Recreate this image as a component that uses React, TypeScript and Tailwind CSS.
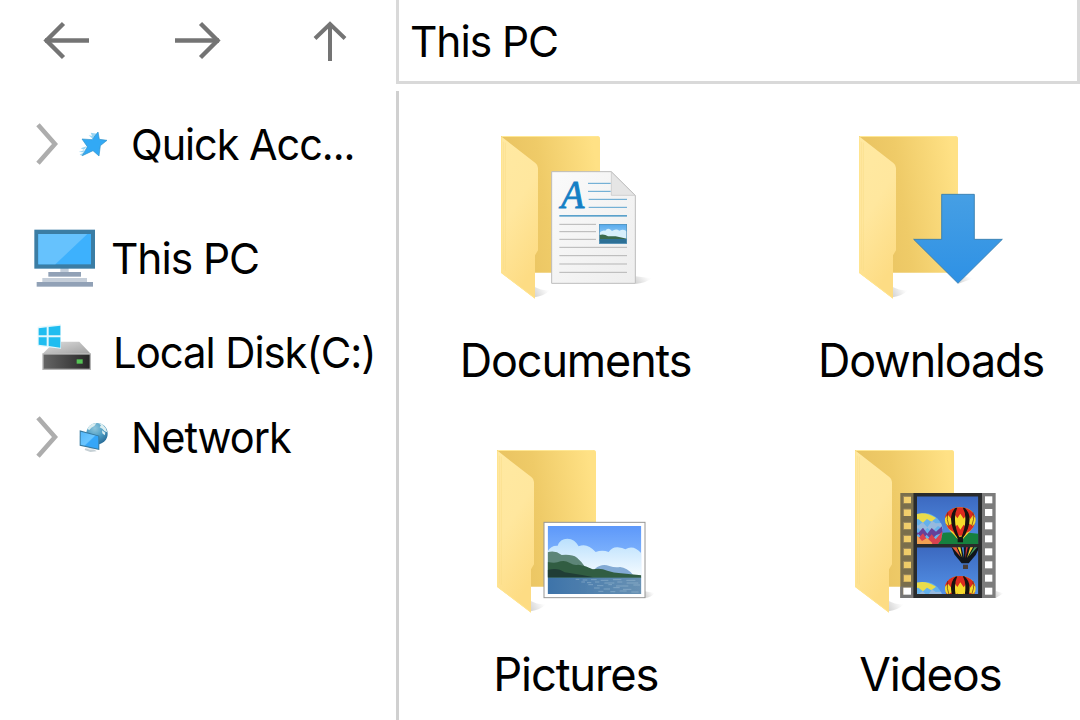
import type { ReactNode } from "react";

const INK = "#747474";

function BackArrow() {
  return (
    <svg className="block" width="48" height="42" viewBox="0 0 48 42" fill="none" stroke={INK} strokeWidth="4.4">
      <path d="M3 20.5H47" />
      <path d="M21.5 3.5L4.5 20.5L21.5 37.5" />
    </svg>
  );
}

function ForwardArrow() {
  return (
    <svg className="block" width="48" height="42" viewBox="0 0 48 42" fill="none" stroke={INK} strokeWidth="4.4">
      <path d="M1 20.5H45" />
      <path d="M26.5 3.5L43.5 20.5L26.5 37.5" />
    </svg>
  );
}

function UpArrow() {
  return (
    <svg className="block" width="34" height="42" viewBox="0 0 34 42" fill="none" stroke={INK} strokeWidth="4">
      <path d="M17 3V41" />
      <path d="M2 18.5L17 4L32 18.5" />
    </svg>
  );
}

function Chevron() {
  return (
    <svg className="block" width="22" height="42" viewBox="0 0 22 42" fill="none" stroke="#adadad" strokeWidth="4.6">
      <path d="M2 1.8L19 21L2 40.2" />
    </svg>
  );
}

function StarIcon() {
  return (
    <svg className="block" width="30" height="27" viewBox="0 0 90 81">
      <path d="M38 5L58 8L50 20L42 14ZM32 13L48 16L44 23ZM8 52L26 46L18 56ZM2 63L20 57L16 64ZM5 71L18 64L14 75Z" fill="#9ad5f3" />
      <path d="M60 3L64 25L87 28L67 44L63 75L45 59L13 74L28 47L12 24L42 26Z" fill="#32a9f5" stroke="#3193c9" strokeWidth="2" />
    </svg>
  );
}

function ComputerIcon() {
  return (
    <svg className="block" width="62" height="58" viewBox="43 41 186 174">
      <rect x="122" y="157" width="25" height="14" fill="#c3cedb" />
      <rect x="86" y="170" width="98" height="14" fill="#91a1b6" />
      <rect x="68" y="188" width="134" height="13" fill="#c5ced9" />
      <rect x="51" y="200" width="169" height="14" fill="#91a1b6" />
      <rect x="44" y="43" width="182" height="117" fill="#3b7da4" />
      <rect x="56" y="56" width="158" height="91" fill="#3db1fd" />
      <path d="M56 56H203L107 147H56Z" fill="#66c2fd" />
    </svg>
  );
}

function DiskIcon() {
  return (
    <svg className="block" width="56" height="48" viewBox="52 328 168 144">
      <defs>
        <linearGradient id="diskTop" x1="0" y1="0" x2="1" y2="1">
          <stop offset="0" stopColor="#dedede" />
          <stop offset="1" stopColor="#a0a0a0" />
        </linearGradient>
        <linearGradient id="diskFront" x1="0" y1="0" x2="1" y2="0">
          <stop offset="0" stopColor="#666" />
          <stop offset="1" stopColor="#262626" />
        </linearGradient>
      </defs>
      <path d="M105 381H179L213 417H69Z" fill="url(#diskTop)" />
      <rect x="70" y="418" width="142" height="46" fill="url(#diskFront)" stroke="#b4b4b4" strokeWidth="4" />
      <rect x="171" y="434" width="18" height="13" fill="#55c455" />
      <path d="M54 336L124 329V402L54 394Z" fill="#e2f7fd" />
      <path d="M57 341L81 338V362H57ZM87 337L122 333V362H87ZM57 368H81V393L57 390ZM87 368H122V399L87 394Z" fill="#1fbdf0" />
    </svg>
  );
}

function NetworkIcon() {
  return (
    <svg className="block" width="30" height="30" viewBox="178 63 90 90">
      <defs>
        <radialGradient id="globe" cx="0.4" cy="0.25" r="0.75">
          <stop offset="0" stopColor="#8fc6dc" />
          <stop offset="0.55" stopColor="#4d9dc4" />
          <stop offset="1" stopColor="#2a6e9a" />
        </radialGradient>
        <linearGradient id="netScreen" x1="0" y1="0" x2="1" y2="1">
          <stop offset="0" stopColor="#55b8fb" />
          <stop offset="0.5" stopColor="#6bc6ff" />
          <stop offset="0.55" stopColor="#35a6f8" />
          <stop offset="1" stopColor="#35a6f8" />
        </linearGradient>
      </defs>
      <circle cx="232" cy="98" r="32" fill="url(#globe)" />
      <path d="M209 75Q218 66 230 67L224 75L215 80L209 87L203 84ZM236 67L248 70L258 81L263 94L255 91L248 83L240 79L244 73ZM247 88L257 95L255 103L248 97Z" fill="#dceef0" />
      <path d="M197 142L225 146L231 151L212 153L195 147Z" fill="#c6d0d5" />
      <path d="M207 136H222V147H207Z" fill="#dfe6e9" />
      <path d="M180 88L239 104V147L180 134Z" fill="#37799f" />
      <path d="M183 92L236 106V143L183 131Z" fill="url(#netScreen)" />
    </svg>
  );
}

function Folder({ x, y, children }: { x: number; y: number; children: ReactNode }) {
  return (
    <svg className="block" width="160" height="168" viewBox="0 0 480 504">
      <defs>
        <linearGradient id="folderBack" x1="0" y1="0.6" x2="1" y2="0.4">
          <stop offset="0.1" stopColor="#e9c361" />
          <stop offset="0.45" stopColor="#efcb68" />
          <stop offset="1" stopColor="#ffe185" />
        </linearGradient>
        <linearGradient id="folderFront" x1="0" y1="0" x2="0.35" y2="1">
          <stop offset="0" stopColor="#ffe9a2" />
          <stop offset="0.5" stopColor="#ffe79e" />
          <stop offset="1" stopColor="#fddc84" />
        </linearGradient>
        <linearGradient id="folderShade" x1="0" y1="0.7" x2="1" y2="0.3">
          <stop offset="0" stopColor="#777" stopOpacity="0.3" />
          <stop offset="0.8" stopColor="#777" stopOpacity="0.03" />
          <stop offset="1" stopColor="#777" stopOpacity="0" />
        </linearGradient>
      </defs>
      <path d="M100 452Q125 465 147 462Q130 480 101 484Z" fill="url(#folderShade)" />
      <path d="M0 0H290Q297 0 297 8V410H0Z" fill="url(#folderBack)" />
      <path d="M2 1.5H290" stroke="#ffe793" strokeWidth="3" />
      <path d="M0 1L103 81Q111 87 111 96V343L102 358V488L0 411Z" fill="url(#folderFront)" />
      <path d="M7 17V400M13 20V404" stroke="#f6da83" strokeWidth="1.5" />
      <path d="M1.5 3V410L101 486" fill="none" stroke="#ffe48f" strokeWidth="3" />
      <g transform={`translate(${-x} ${-y})`}>{children}</g>
    </svg>
  );
}

function DocumentsIcon() {
  return (
    <Folder x={33} y={33}>
      <defs>
        <linearGradient id="paper" x1="0" y1="0" x2="1" y2="1">
          <stop offset="0" stopColor="#fafafa" />
          <stop offset="1" stopColor="#eeeeee" />
        </linearGradient>
        <linearGradient id="thumbSky" x1="0" y1="0" x2="0" y2="1">
          <stop offset="0" stopColor="#53a8ed" />
          <stop offset="1" stopColor="#cdeafa" />
        </linearGradient>
      </defs>
      <path d="M436 454L486 460Q465 475 436 477Z" fill="url(#folderShade)" />
      <path d="M185 140H364L436 211V475H185Z" fill="url(#paper)" stroke="#bcbcbc" strokeWidth="3" />
      <path d="M364 141V211H435Z" fill="#e5e5e5" stroke="#c1c1c1" strokeWidth="2" />
      <text x="213" y="248" fontFamily="Liberation Serif, serif" fontSize="119" fontStyle="italic" fill="#147fc5" stroke="#147fc5" strokeWidth="2.5" textLength="70" lengthAdjust="spacingAndGlyphs">A</text>
      <path d="M294 175H362M294 199H362M296 223H411M296 247H411" stroke="#4295ca" strokeWidth="2.6" />
      <path d="M208 272.5H411" stroke="#2786be" strokeWidth="4" />
      <path d="M208 298H318M208 320H318M208 343H318M208 367H411M208 392H411M208 417H411M208 442H411" stroke="#b5b5b5" strokeWidth="3" />
      <rect x="327" y="297" width="84" height="60" fill="url(#thumbSky)" />
      <path d="M328 324Q336 314 346 317Q354 305 366 318Q378 309 388 317Q402 311 411 320V344H328Z" fill="#d7effb" />
      <path d="M328 330Q343 326 354 334L377 334L411 341V348H328Z" fill="#3a694c" />
      <path d="M328 342H411V356H328Z" fill="#2d7096" />
      <rect x="328" y="298" width="82" height="58" fill="none" stroke="#5590b5" strokeWidth="2" />
    </Folder>
  );
}

function DownloadsIcon() {
  return (
    <Folder x={27} y={33}>
      <defs>
        <linearGradient id="arrowBlue" x1="0" y1="0" x2="0" y2="1">
          <stop offset="0" stopColor="#469fe4" />
          <stop offset="1" stopColor="#2e91e5" />
        </linearGradient>
      </defs>
      <path d="M345 455L372 459L325 476Z" fill="url(#folderShade)" />
      <path d="M275 208H373V343H457L324 475L191 343H275Z" fill="url(#arrowBlue)" stroke="#347aa9" strokeWidth="2.5" />
    </Folder>
  );
}

function PicturesIcon() {
  return (
    <Folder x={36} y={30}>
      <defs>
        <linearGradient id="sky" x1="0" y1="0" x2="0" y2="1">
          <stop offset="0" stopColor="#5d98fa" />
          <stop offset="1" stopColor="#aad6ff" />
        </linearGradient>
        <linearGradient id="cloud" x1="0" y1="0" x2="0" y2="1">
          <stop offset="0" stopColor="#bae0fd" />
          <stop offset="1" stopColor="#fafdff" />
        </linearGradient>
        <linearGradient id="lake" x1="0" y1="0" x2="1" y2="0">
          <stop offset="0" stopColor="#3d73a9" />
          <stop offset="1" stopColor="#6992b4" />
        </linearGradient>
        <clipPath id="photoClip">
          <rect x="188" y="258" width="281" height="204" />
        </clipPath>
      </defs>
      <path d="M480 454L510 459Q498 472 480 474Z" fill="url(#folderShade)" />
      <rect x="177" y="247" width="303" height="226" fill="#fff" stroke="#969696" strokeWidth="3" />
      <g clipPath="url(#photoClip)">
        <rect x="188" y="258" width="281" height="204" fill="url(#sky)" />
        <path d="M188 334Q197 316 218 317Q225 296 247 296Q270 297 281 319Q306 307 332 336Q352 329 371 336Q381 321 398 322Q413 324 421 328Q445 313 469 340V418H188Z" fill="url(#cloud)" />
        <path d="M330 386Q350 370 373 378Q390 384 405 381Q426 383 444 404H340Z" fill="#83aad4" />
        <path d="M188 337Q210 330 230 345Q261 342 276 353Q292 367 300 380L326 390L330 410H188Z" fill="#5d8578" />
        <path d="M188 366Q207 370 217 367Q238 359 253 368Q270 378 279 374Q306 378 323 388Q347 383 367 392Q386 399 408 400L469 406V414H188Z" fill="#315d42" />
        <path d="M188 390Q218 381 239 397Q281 403 326 412H188Z" fill="#203d36" />
        <rect x="188" y="413" width="281" height="49" fill="url(#lake)" />
        <path d="M272 418H283M293 420H307M318 419H335M347 421H370M384 419H409M424 421H451M289 426H300M306 428H319M330 426H343M358 429H388M397 426H412M425 429H460M310 434H324M336 437H355M370 434H381M393 438H430M445 435H465M327 444H344M356 447H375M385 443H404M414 448H439M340 454H355M376 455H391M404 453H425M439 456H461" stroke="#acc8dc" strokeWidth="2" opacity="0.65" />
      </g>
    </Folder>
  );
}

function HotAirBalloon() {
  return (
    <>
      <path d="M345 202C317 202 299 221 300 242C302 263 326 282 338 297H354C366 282 391 263 392 240C392 219 374 202 345 202Z" fill="#f5da2c" />
      <path d="M345 202C320 202 302 216 300 234L309 225L319 237L328 222L337 235L346 221L356 236L365 222L376 237L384 225L391 235C388 215 370 202 345 202ZM301 250L310 258L320 251L327 263L337 254L346 269L356 254L364 264L374 251L383 258L390 249Q386 264 376 272L365 278L359 287H333L324 275L311 266Z" fill="#dc2b1f" />
      <path d="M331 204Q319 216 318 237Q319 267 339 297H345Q329 263 330 235Q330 217 337 203ZM358 203Q373 215 374 237Q374 265 352 297H347Q362 261 361 235Q361 215 353 203Z" fill="#17130f" />
      <path d="M308 217Q304 240 312 258M384 217Q389 240 380 258" fill="none" stroke="#5f2416" strokeWidth="2" />
      <path d="M338 290H354V307H338Z" fill="#161616" />
    </>
  );
}

function StripedBalloon() {
  return (
    <>
      <circle cx="240" cy="273" r="53" fill="#64b1eb" />
      <path d="M209 224Q240 212 273 234L259 245L246 237L234 248L220 237L208 240Z" fill="#e9dc4b" />
      <path d="M193 251L208 242L219 257L233 247L247 262L261 242L272 250L288 249L294 267L279 258L260 276L247 263L234 279L219 264L207 275H191Z" fill="#96b9de" />
      <path d="M191 271L206 264L219 280L234 263L247 281L260 264L273 275L291 259L293 278L274 285L259 299L245 284L234 298L220 282L208 292H192Z" fill="#654099" />
      <path d="M193 289L206 278L220 295L234 280L247 300L260 283L272 298L292 274L289 300L277 314H199Z" fill="#d94250" />
      <path d="M201 299L218 288L231 303L246 294L262 309L257 322L230 323L208 315Z" fill="#f1a052" />
    </>
  );
}

function VideosIcon() {
  const holes = [169, 207, 247, 286, 325, 364, 404, 443];
  return (
    <Folder x={30} y={30}>
      <defs>
        <linearGradient id="filmSky" x1="0" y1="0" x2="0" y2="1">
          <stop offset="0" stopColor="#3c69c0" />
          <stop offset="1" stopColor="#5492e7" />
        </linearGradient>
        <clipPath id="frameTop">
          <rect x="216" y="169" width="184" height="143" />
        </clipPath>
        <clipPath id="frameBottom">
          <rect x="216" y="322" width="184" height="140" />
        </clipPath>
      </defs>
      <path d="M452 453L476 460L452 474Z" fill="url(#folderShade)" />
      <path fillRule="evenodd" d="M166 159H206V474H166ZM175 169V190H198V169ZM175 207V228H198V207ZM175 247V268H198V247ZM175 286V307H198V286ZM175 325V346H198V325ZM175 364V385H198V364ZM175 404V425H198V404ZM175 443V464H198V443Z" fill="#6d6449" fillOpacity="0.9" />
      <rect x="166" y="440" width="40" height="34" fill="#767676" />
      <rect x="411" y="159" width="41" height="315" fill="#7c7c7c" />
      {holes.map((top) => (
        <g key={top}>
          <rect x="420" y={top} width="22" height="21" fill="#fff" />
          <path d={`M175 ${top + 21}V${top}H198`} fill="none" stroke="#94825c" strokeWidth="3" />
        </g>
      ))}
      <rect x="175" y="443" width="23" height="21" fill="#fff" />
      <rect x="205" y="159" width="206" height="315" fill="#292b2c" />
      <g clipPath="url(#frameTop)">
        <rect x="216" y="169" width="184" height="144" fill="url(#filmSky)" />
        <path d="M280 280Q330 273 400 281V313H280Z" fill="#16803e" />
        <StripedBalloon />
        <HotAirBalloon />
      </g>
      <g clipPath="url(#frameBottom)">
        <rect x="216" y="322" width="184" height="144" fill="url(#filmSky)" />
        <path d="M316 313H407L392 345L371 370H350L329 344Z" fill="#10151b" />
        <path d="M320 320L347 351L334 320Z" fill="#e25d3b" />
        <path d="M337 320L352 353L346 320Z" fill="#f2d832" />
        <path d="M350 320L357 354L356 320Z" fill="#4291e6" />
        <path d="M363 320L361 355L369 320Z" fill="#cf303e" />
        <path d="M376 320L366 354L385 320Z" fill="#eece31" />
        <path d="M389 320L371 350L398 320Z" fill="#439c63" />
        <rect x="354" y="374" width="15" height="13" fill="#493d38" />
        <g transform="translate(0 206)">
          <StripedBalloon />
          <HotAirBalloon />
        </g>
      </g>
    </Folder>
  );
}

const files = [
  { name: "Documents", Icon: DocumentsIcon, offset: "pl-[102px]", scale: "scale-x-[0.977]" },
  { name: "Downloads", Icon: DownloadsIcon, offset: "pl-[105px]", scale: "scale-x-[0.975]" },
  { name: "Pictures", Icon: PicturesIcon, offset: "pl-[98px]", scale: "scale-x-[0.985]" },
  { name: "Videos", Icon: VideosIcon, offset: "pl-[101px]", scale: "scale-x-[0.995]" },
];

function Label({ className, children }: { className: string; children: ReactNode }) {
  return (
    <span className={`inline-block origin-left whitespace-nowrap text-[43px] leading-none tracking-[-0.025em] ${className}`}>
      {children}
    </span>
  );
}

export default function App() {
  return (
    <div className="flex h-[720px] w-[1080px] overflow-hidden bg-white font-['Inter','Liberation_Sans',sans-serif] text-black">
      <aside className="flex w-[396px] shrink-0 flex-col">
        <header className="flex h-[91px] items-start pt-5 pl-[42px]">
          <button aria-label="Back"><BackArrow /></button>
          <button aria-label="Forward" className="ml-[84px]"><ForwardArrow /></button>
          <button aria-label="Up" className="ml-[91px]"><UpArrow /></button>
        </header>
        <nav className="flex flex-col">
          <div className="flex h-[106px] items-center pl-9">
            <Chevron />
            <div className="ml-5 w-[53px]"><StarIcon /></div>
            <Label className="scale-x-[0.963]">Quick Acc...</Label>
          </div>
          <div className="flex h-[122px] items-center pl-[34px]">
            <ComputerIcon />
            <Label className="ml-[15px] scale-x-[0.988] pt-px">This PC</Label>
          </div>
          <div className="flex h-[66px] items-center pl-[37px]">
            <div className="-mt-2"><DiskIcon /></div>
            <Label className="ml-5 scale-x-[0.974] pt-px">Local Disk(C:)</Label>
          </div>
          <div className="flex h-[104px] items-center pl-9">
            <Chevron />
            <div className="ml-[21px] w-[52px]"><NetworkIcon /></div>
            <Label className="scale-x-[0.966]">Network</Label>
          </div>
        </nav>
      </aside>
      <div className="flex min-w-0 flex-1 flex-col">
        <div className="mb-[7px] flex h-[84px] shrink-0 items-center border-x-[3px] border-b-[3px] border-[#d9d9d9] pt-0.5 pl-[11px]">
          <Label className="scale-x-[0.988]">This PC</Label>
        </div>
        <main className="grid flex-1 grid-cols-[355px_355px] auto-rows-[314px] overflow-hidden border-l-[3px] border-[#d0d0d0] pt-[45px]">
          {files.map(({ name, Icon, offset, scale }) => (
            <section key={name} className="flex flex-col">
              <div className={offset}><Icon /></div>
              <div className="mt-[33px] flex h-[46px] items-center justify-center pr-0.5">
                <span className={`whitespace-nowrap text-[46px] leading-none tracking-[-0.025em] ${scale}`}>{name}</span>
              </div>
            </section>
          ))}
        </main>
      </div>
    </div>
  );
}
